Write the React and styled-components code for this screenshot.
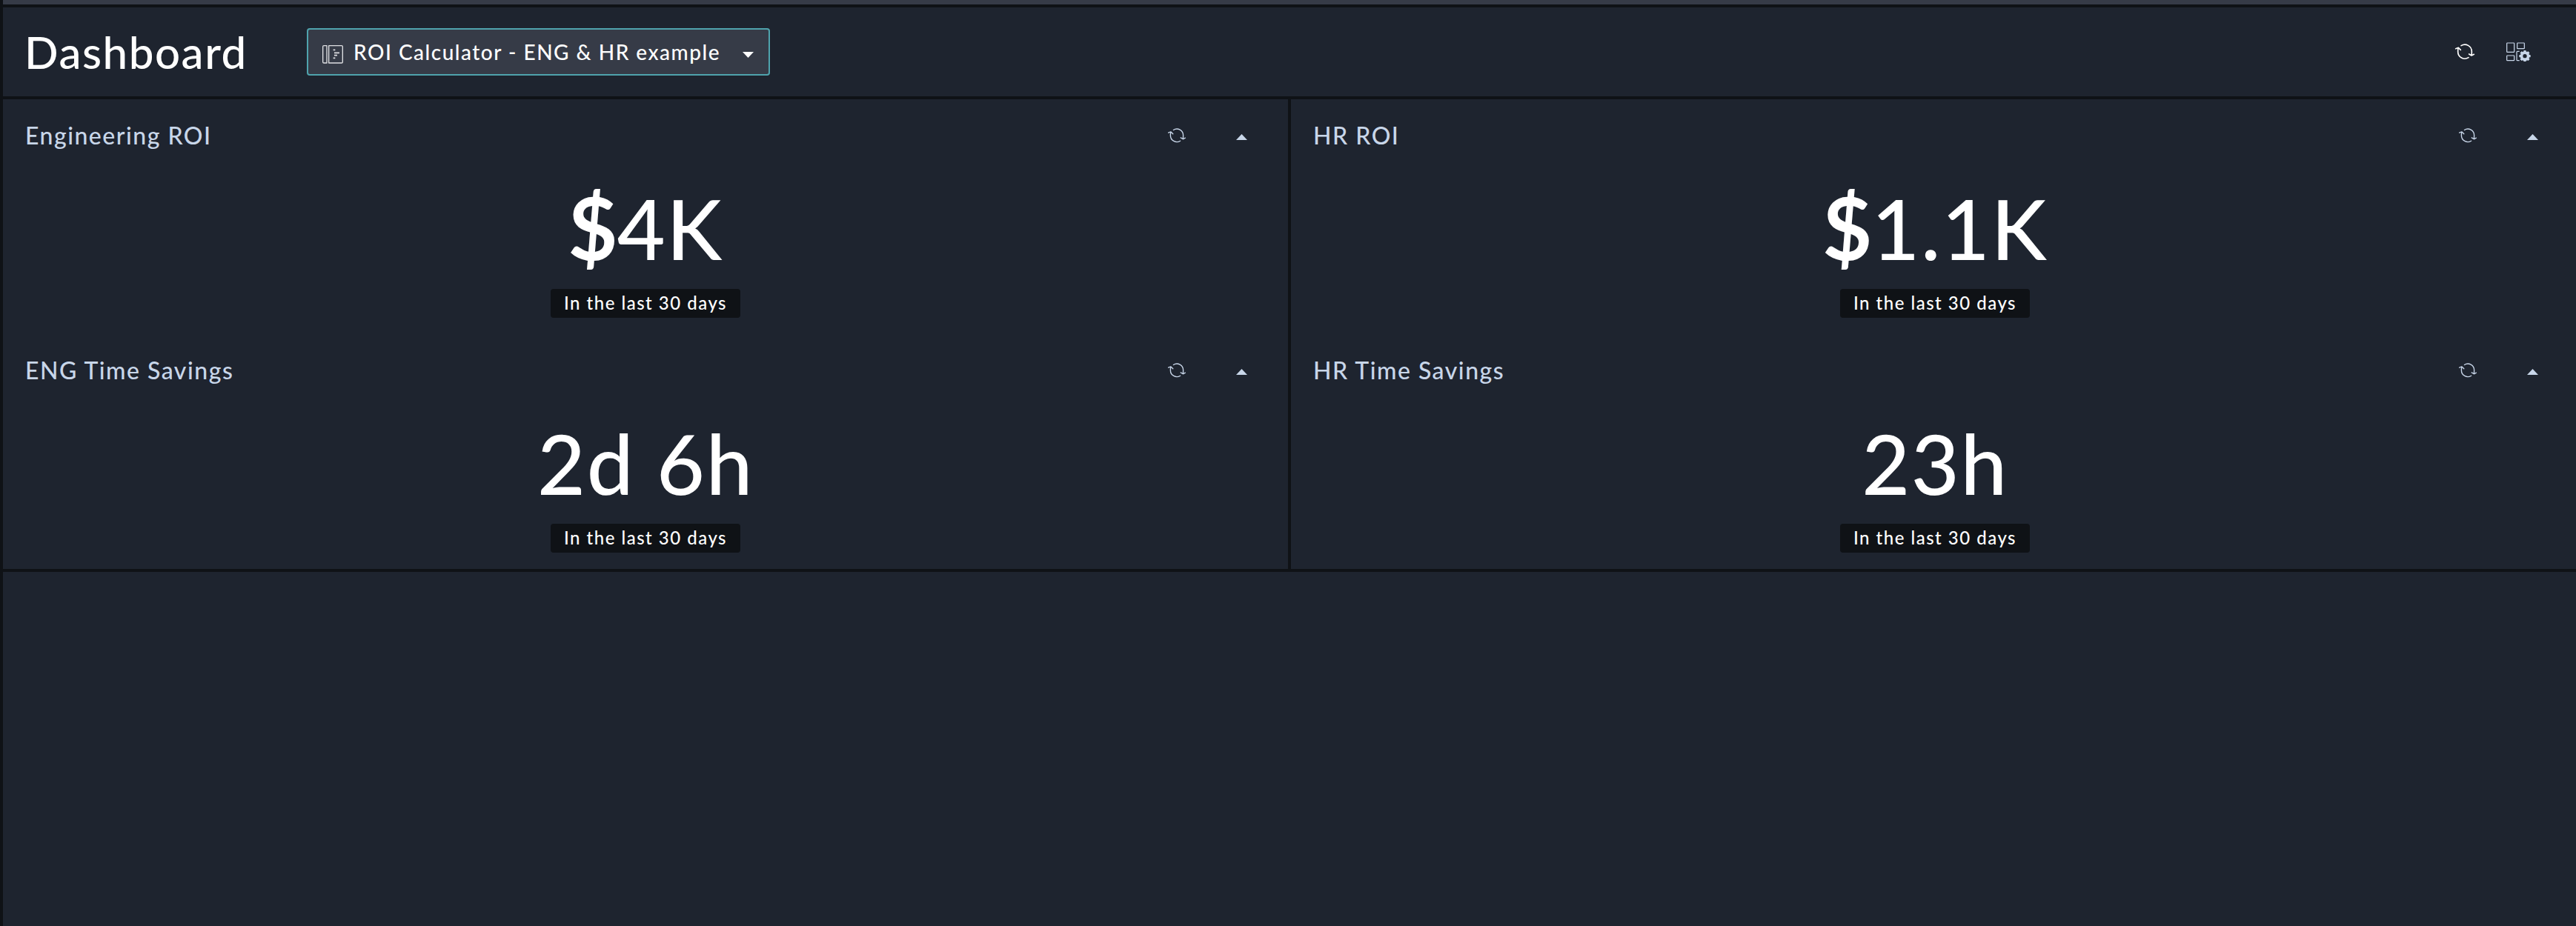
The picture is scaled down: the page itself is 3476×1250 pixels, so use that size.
import React from 'react';
import styled, { createGlobalStyle } from 'styled-components';

const c = { bg: '#1e242f', line: '#0f1216', raised: '#363b47', accent: '#4fa3ad', soft: '#c8d6e9', white: '#ffffff' };

const GlobalStyle = createGlobalStyle`
  * { box-sizing: border-box; }
  body { margin: 0; background: ${c.bg}; overflow: hidden; }
`;
const Page = styled.div`
  height: 1250px; overflow: hidden; display: flex; flex-direction: column;
  border-left: 4px solid ${c.line}; background: ${c.bg}; color: ${c.white};
  font-family: Lato, sans-serif; font-weight: 500;
`;
const TopStrip = styled.div`
  height: 10px; flex: none; background: ${c.raised}; border-bottom: 4px solid ${c.line};
`;
const Header = styled.header`
  height: 124px; flex: none; display: flex; align-items: center; padding: 0 61px 0 29px;
  border-bottom: 4px solid ${c.line};
`;
const Title = styled.h1`
  margin: 0; flex: none; width: 381px;
  font-size: 60px; font-weight: 500; letter-spacing: 1.55px; line-height: 72px;
`;
const Select = styled.button`
  display: flex; align-items: center; width: 625px; height: 64px; padding: 0 20px 0 19px;
  border: 2px solid ${c.accent}; border-radius: 4px; background: ${c.raised}; color: inherit;
  font: 500 28px/34px Lato, sans-serif; letter-spacing: 1.5px; text-align: left;
`;
const SelectLabel = styled.span`flex: 1; margin-left: 14px; white-space: nowrap;`;
const HeaderActions = styled.div`display: flex; align-items: center; gap: 43px; margin-left: auto;`;
const Grid = styled.main`
  display: grid; grid-template-columns: 1738px 1738px; grid-auto-rows: 317px; flex: none; height: 638px;
  border-bottom: 4px solid ${c.line};
`;
const Panel = styled.section`
  display: flex; flex-direction: column; align-items: center;
  border-right: ${(p) => (p.$divided ? `4px solid ${c.line}` : 'none')};
`;
const PanelHeader = styled.div`
  align-self: stretch; display: flex; align-items: center; height: 97px; padding: 0 55px 0 30px;
`;
const PanelTitle = styled.h2`
  margin: 0; flex: 1; font-size: 32px; line-height: 40px; font-weight: 500; letter-spacing: 1.5px; color: ${c.soft};
`;
const PanelActions = styled.div`display: flex; align-items: center; gap: 68px;`;
const Value = styled.div`
  height: 159px; line-height: 153px; font-size: 112px; letter-spacing: 1.6px; white-space: pre;
`;
const Currency = styled.span`font-size: 116px; line-height: 0; font-weight: 700; letter-spacing: -0.7px;`;
const Badge = styled.div`
  width: 256px; height: 39px; border-radius: 4px; background: ${c.line}; text-align: center;
  font-size: 24px; line-height: 37px; letter-spacing: 1.5px;
`;

const RefreshSvg = styled.svg`overflow: visible;`;
const Refresh = ({ w = 26, stroke = 5, color = c.white }) => (
  <RefreshSvg width={w} height={(w * 64) / 78} viewBox="0 0 78 64" fill="none" stroke={color} strokeWidth={stroke} strokeLinecap="round" strokeLinejoin="round">
    <path d="M24 8A28 28 0 0 1 67 32Q67 40 66 47M56 42L66 48L76 43" />
    <path d="M54 56A28 28 0 0 1 11 32Q11 24 12 17M22 25L13 16L2 20" />
  </RefreshSvg>
);
const CaretSvg = styled.svg`margin-top: ${(p) => p.$drop}px; flex: none;`;
const Caret = ({ up, color = c.white }) => (
  <CaretSvg $drop={up ? 5 : 7} width="15" height="8" viewBox="0 0 15 8" fill={color}>
    <path d={up ? 'M7.5 0L15 8H0Z' : 'M0 0H15L7.5 8Z'} />
  </CaretSvg>
);
const BoardSvg = styled.svg`margin-top: 7px; flex: none;`;
const BoardIcon = () => (
  <BoardSvg width="28" height="25" viewBox="0 0 84 75" fill="none" stroke="#dfe0e3" strokeWidth="4" strokeLinejoin="round">
    <path d="M6 2H18V72H6Q2 72 2 68V6Q2 2 6 2ZM26 2H78Q82 2 82 6V68Q82 72 78 72H26Z" />
    <path d="M44 19H52M48 31H69M48 41H60M44 52H52" strokeWidth="5" />
  </BoardSvg>
);
const teeth = Array.from({ length: 8 }, (_, i) => i * 45);
const SettingsIcon = () => (
  <svg width="33" height="26" viewBox="0 0 99 78" fill="none" stroke={c.soft} strokeWidth="3.7">
    <rect x="2" y="3" width="30" height="37" rx="2" />
    <rect x="44" y="3" width="29" height="23" rx="2" />
    <rect x="2" y="54" width="30" height="20" rx="2" />
    <path d="M53 37H45Q42 37 42 40V71Q42 74 45 74H53" />
    <circle cx="75" cy="56" r="13.5" strokeWidth="11" />
    {teeth.map((a) => (
      <rect key={a} x="70" y="33" width="10" height="9" rx="2" fill={c.soft} stroke="none" transform={`rotate(${a} 75 56)`} />
    ))}
  </svg>
);

const panels = [
  { title: 'Engineering ROI', currency: '$', value: '4K' },
  { title: 'HR ROI', currency: '$', value: '1.1K' },
  { title: 'ENG Time Savings', value: '2d 6h' },
  { title: 'HR Time Savings', value: '23h' },
];

export default function App() {
  return (
    <>
      <GlobalStyle />
      <Page>
        <TopStrip />
        <Header>
          <Title>Dashboard</Title>
          <Select>
            <BoardIcon />
            <SelectLabel>ROI Calculator - ENG &amp; HR example</SelectLabel>
            <Caret />
          </Select>
          <HeaderActions>
            <Refresh />
            <SettingsIcon />
          </HeaderActions>
        </Header>
        <Grid>
          {panels.map((p, i) => (
            <Panel key={p.title} $divided={i % 2 === 0}>
              <PanelHeader>
                <PanelTitle>{p.title}</PanelTitle>
                <PanelActions>
                  <Refresh w={24} stroke={4.5} color={c.soft} />
                  <Caret up color={c.soft} />
                </PanelActions>
              </PanelHeader>
              <Value>
                {p.currency && <Currency>{p.currency}</Currency>}
                {p.value}
              </Value>
              <Badge>In the last 30 days</Badge>
            </Panel>
          ))}
        </Grid>
      </Page>
    </>
  );
}
